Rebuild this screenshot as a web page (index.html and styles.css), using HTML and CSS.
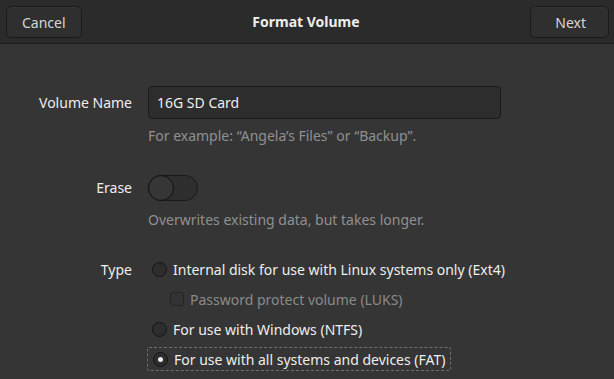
FILE: index.html
```html
<!doctype html>
<html lang="en">
  <head>
    <meta charset="UTF-8" />
    <title>Format Volume</title>
    <link rel="stylesheet" href="styles.css">
  </head>
  <body>
    <div class="header-bar">
      <button class="hb-btn">Cancel</button>
      <h1 class="hb-title">Format Volume</h1>
      <button class="hb-btn">Next</button>
    </div>

    <div class="form-grid">
      <label class="row-label" for="volName">Volume Name</label>
      <div class="field">
        <input type="text" id="volName" class="entry" value="16G SD Card" />
        <p class="hint">For example: “Angela’s Files” or “Backup”.</p>
      </div>

      <span class="row-label label-erase">Erase</span>
      <div class="field field-erase">
        <span class="switch"><span class="knob"></span></span>
        <p class="hint">Overwrites existing data, but takes longer.</p>
      </div>

      <span class="row-label label-type">Type</span>
      <div class="field field-type">
        <div class="option">
          <span class="radio"></span>
          <span>Internal disk for use with Linux systems only (Ext4)</span>
        </div>
        <div class="option sub disabled">
          <span class="check"></span>
          <span>Password protect volume (LUKS)</span>
        </div>
        <div class="option">
          <span class="radio"></span>
          <span>For use with Windows (NTFS)</span>
        </div>
        <div class="option focused">
          <span class="radio checked"></span>
          <span>For use with all systems and devices (FAT)</span>
        </div>
      </div>
    </div>
  </body>
</html>
```

FILE: styles.css
```css
* {
  box-sizing: border-box;
  margin: 0;
  padding: 0;
  font-family: "Noto Sans", "Open Sans", sans-serif;
}

body {
  background-color: #353535;
  color: #eeeeec;
  font-size: 14px;
  width: 614px;
  height: 379px;
  overflow: hidden;
}

/* Header bar */
.header-bar {
  height: 44px;
  background-color: #2b2b2b;
  border-bottom: 1px solid #1c1c1c;
  display: flex;
  align-items: center;
  justify-content: space-between;
  padding: 0 5px 0 6px;
}

.hb-btn {
  height: 32px;
  padding: 0 15px;
  margin-top: 1px;
  background-color: #2f2f2f;
  color: #d6d6d6;
  border: 1px solid #1b1b1b;
  border-radius: 5px;
  font-size: 14px;
  box-shadow: inset 0 1px rgba(255, 255, 255, 0.03);
}

.hb-btn:last-child {
  padding: 0 22px 0 24px;
}

.hb-title {
  font-size: 14px;
  font-weight: 700;
  color: #eeeeec;
}

/* Form */
.form-grid {
  display: grid;
  grid-template-columns: 132px 1fr;
  column-gap: 16px;
  padding-top: 42px;
}

.row-label {
  justify-self: end;
  padding-top: 7px;
  color: #eeeeec;
}

.entry {
  display: block;
  width: 353px;
  height: 33px;
  padding: 0 8px;
  background-color: #2d2d2d;
  border: 1px solid #1b1b1b;
  border-radius: 4px;
  color: #eeeeec;
  font-size: 14px;
  outline: none;
}

.hint {
  color: #909090;
  margin-top: 7px;
  line-height: 20px;
  white-space: nowrap;
}

.label-erase {
  margin-top: 28px;
  padding-top: 4px;
}

.field-erase {
  margin-top: 29px;
}

.field-erase .hint {
  margin-top: 9px;
}

.switch {
  display: block;
  width: 50px;
  height: 26px;
  border-radius: 13px;
  background-color: #2e2e2e;
  border: 1px solid #1b1b1b;
  position: relative;
}

.knob {
  position: absolute;
  top: -1px;
  left: -1px;
  width: 26px;
  height: 26px;
  border-radius: 50%;
  background-color: #363636;
  border: 1px solid #111111;
}

.label-type {
  margin-top: 27px;
  padding-top: 3px;
}

.field-type {
  margin-top: 27px;
}

.option {
  display: flex;
  align-items: center;
  gap: 6px;
  height: 24px;
  margin-bottom: 6px;
  padding-left: 4px;
  white-space: nowrap;
}

.option.sub {
  padding-left: 22px;
}

.option.disabled {
  color: #8a8a8a;
}

.option.focused {
  width: 304px;
  margin-left: -1px;
  padding-left: 5px;
  border: 1px dashed #707070;
  border-radius: 2px;
}

.radio {
  width: 15px;
  height: 15px;
  border-radius: 50%;
  background-color: #2d2d2d;
  border: 1px solid #151515;
  flex-shrink: 0;
  position: relative;
}

.radio.checked::after {
  content: "";
  position: absolute;
  top: 4px;
  left: 4px;
  width: 5px;
  height: 5px;
  border-radius: 50%;
  background-color: #eeeeec;
}

.check {
  width: 14px;
  height: 14px;
  border: 1px solid #242424;
  border-radius: 3px;
  background-color: #333333;
  flex-shrink: 0;
}
```
